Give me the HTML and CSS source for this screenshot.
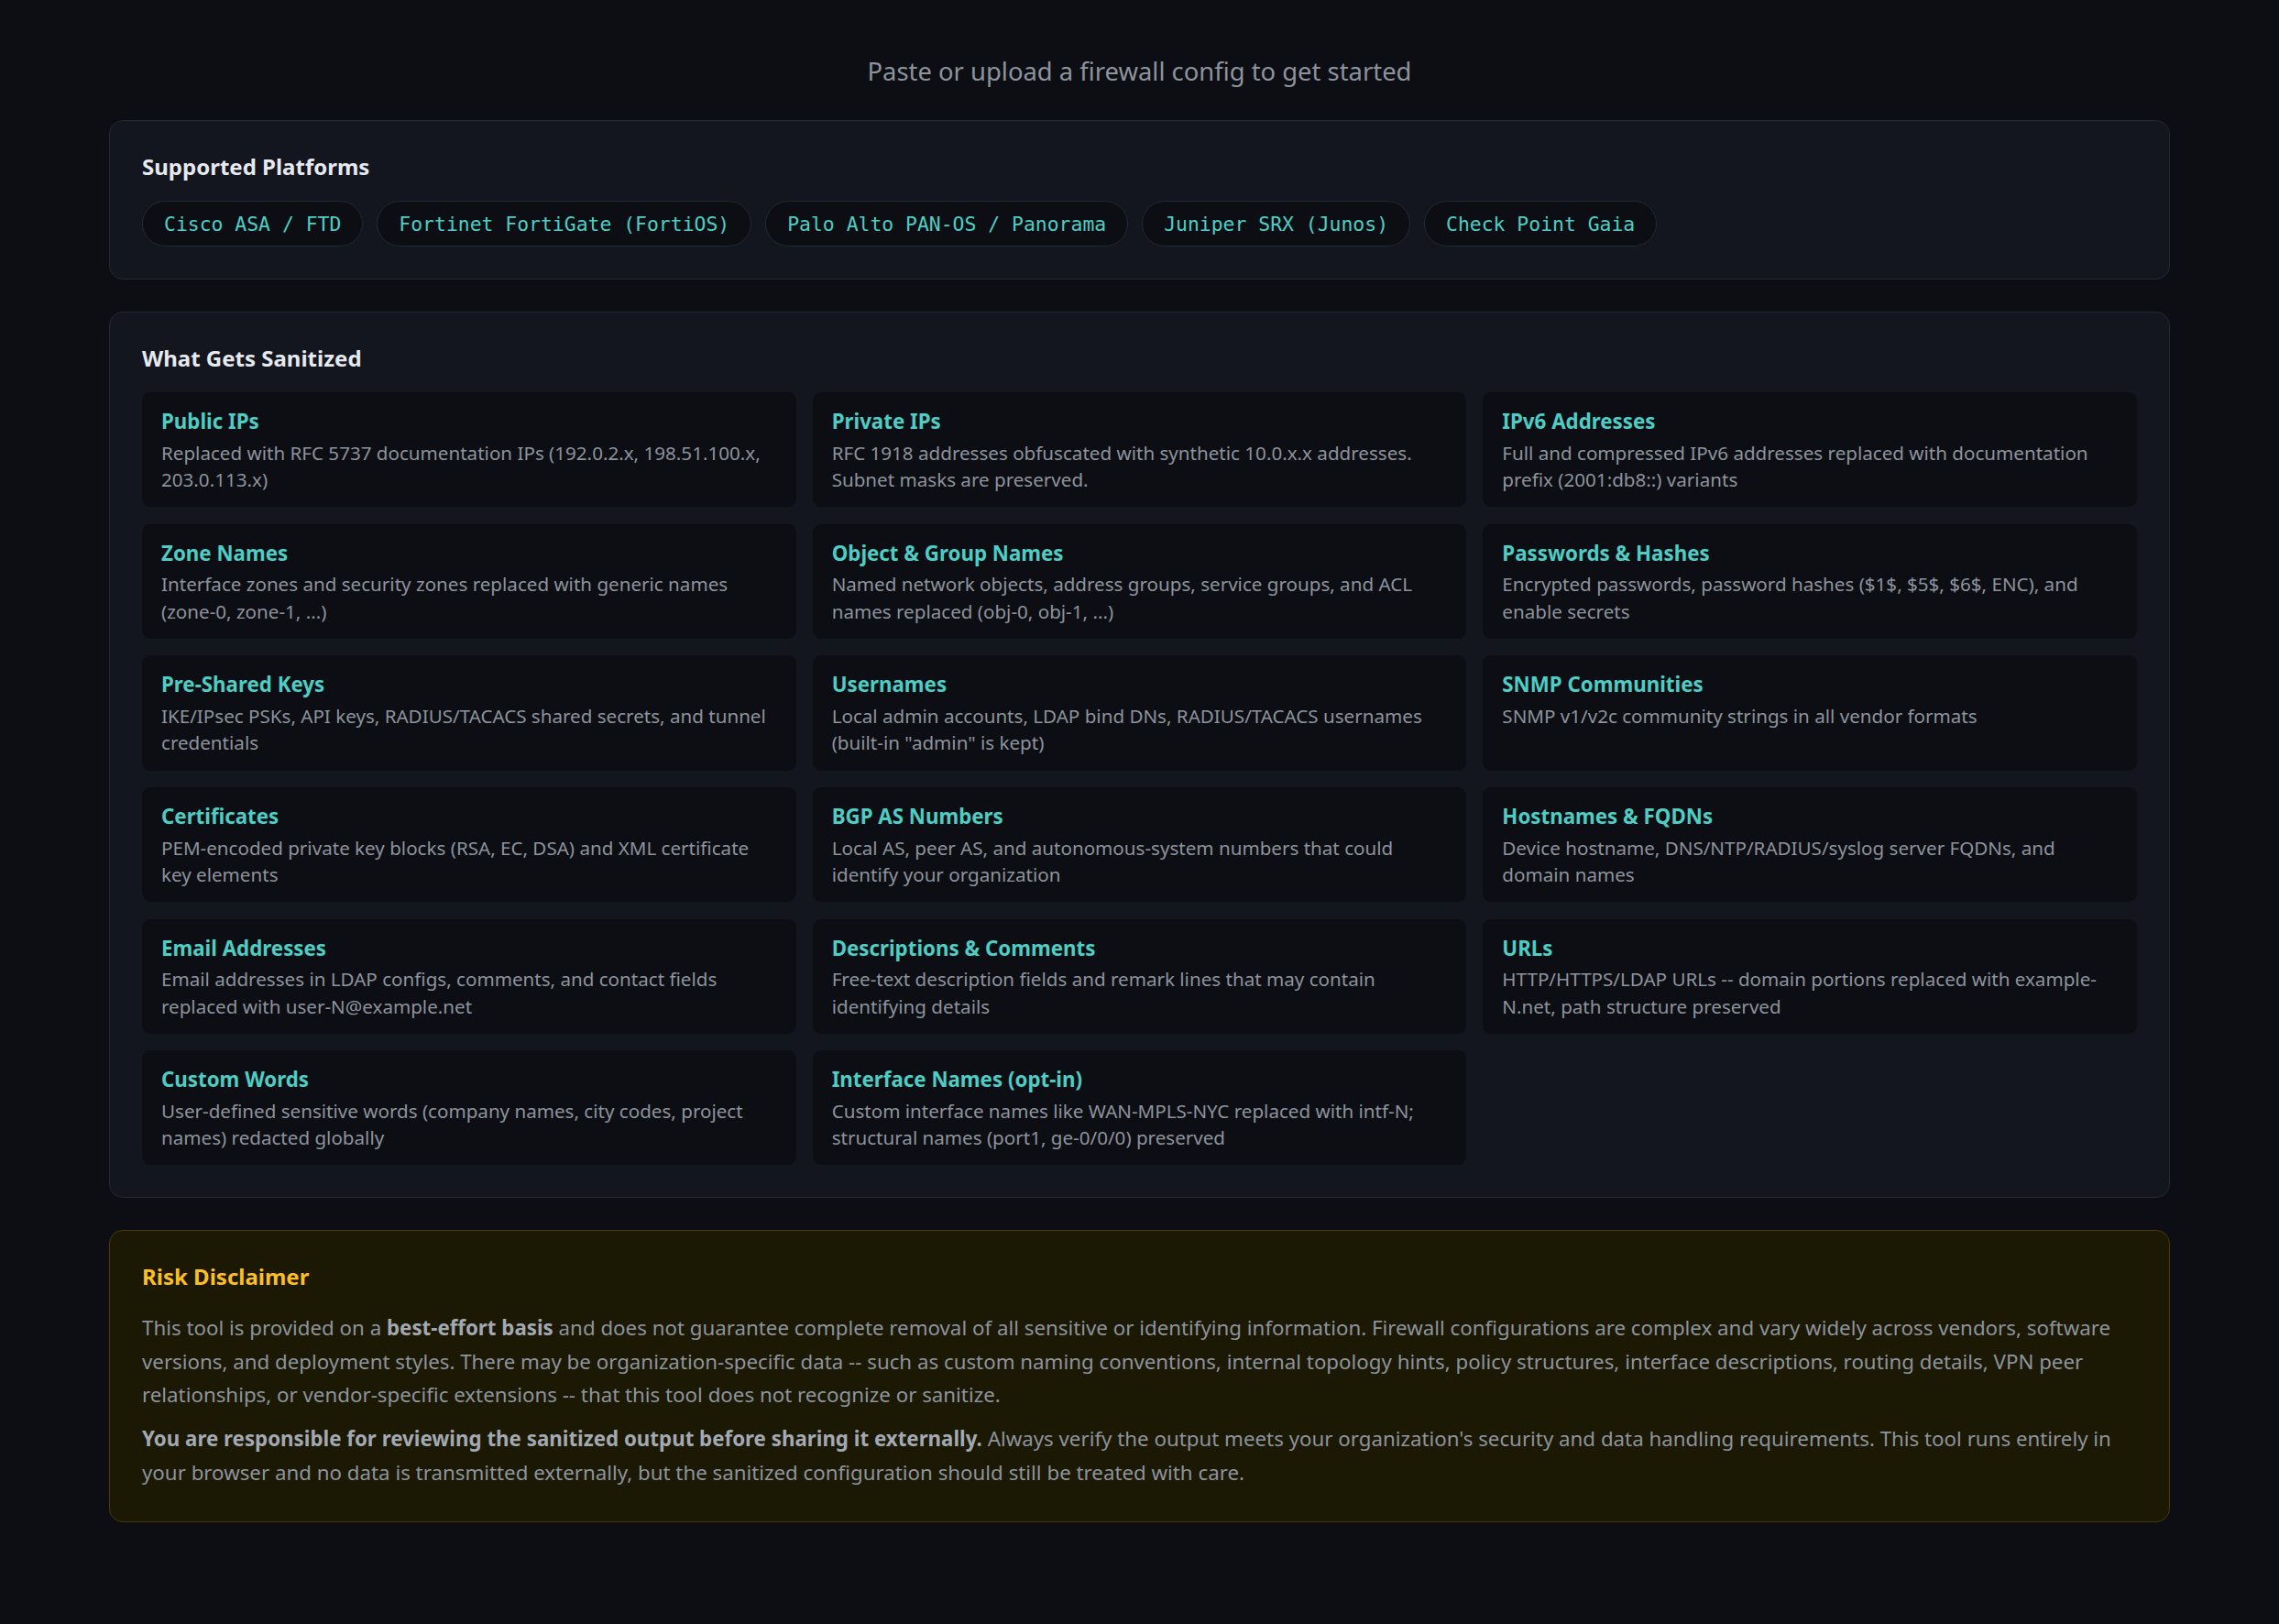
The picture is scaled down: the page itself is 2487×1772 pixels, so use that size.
FILE: index.html
```html
<!DOCTYPE html>
<html lang="en">
<head>
<meta charset="utf-8">
<title>Firewall Config Sanitizer</title>
<link rel="stylesheet" href="styles.css">
</head>
<body>
<main class="container">
  <p class="hint">Paste or upload a firewall config to get started</p>

  <section class="panel">
    <h2 class="panel-title">Supported Platforms</h2>
    <div class="chips">
      <span class="chip">Cisco ASA / FTD</span>
      <span class="chip">Fortinet FortiGate (FortiOS)</span>
      <span class="chip">Palo Alto PAN-OS / Panorama</span>
      <span class="chip">Juniper SRX (Junos)</span>
      <span class="chip">Check Point Gaia</span>
    </div>
  </section>

  <section class="panel">
    <h2 class="panel-title">What Gets Sanitized</h2>
    <div class="grid">
      <div class="card"><h3 class="card-title">Public IPs</h3><p class="card-desc">Replaced with RFC 5737 documentation IPs (192.0.2.x, 198.51.100.x, 203.0.113.x)</p></div>
      <div class="card"><h3 class="card-title">Private IPs</h3><p class="card-desc">RFC 1918 addresses obfuscated with synthetic 10.0.x.x addresses. Subnet masks are preserved.</p></div>
      <div class="card"><h3 class="card-title">IPv6 Addresses</h3><p class="card-desc">Full and compressed IPv6 addresses replaced with documentation prefix (2001:db8::) variants</p></div>
      <div class="card"><h3 class="card-title">Zone Names</h3><p class="card-desc">Interface zones and security zones replaced with generic names (zone-0, zone-1, ...)</p></div>
      <div class="card"><h3 class="card-title">Object &amp; Group Names</h3><p class="card-desc">Named network objects, address groups, service groups, and ACL names replaced (obj-0, obj-1, ...)</p></div>
      <div class="card"><h3 class="card-title">Passwords &amp; Hashes</h3><p class="card-desc">Encrypted passwords, password hashes ($1$, $5$, $6$, ENC), and enable secrets</p></div>
      <div class="card"><h3 class="card-title">Pre-Shared Keys</h3><p class="card-desc">IKE/IPsec PSKs, API keys, RADIUS/TACACS shared secrets, and tunnel credentials</p></div>
      <div class="card"><h3 class="card-title">Usernames</h3><p class="card-desc">Local admin accounts, LDAP bind DNs, RADIUS/TACACS usernames (built-in "admin" is kept)</p></div>
      <div class="card"><h3 class="card-title">SNMP Communities</h3><p class="card-desc">SNMP v1/v2c community strings in all vendor formats</p></div>
      <div class="card"><h3 class="card-title">Certificates</h3><p class="card-desc">PEM-encoded private key blocks (RSA, EC, DSA) and XML certificate key elements</p></div>
      <div class="card"><h3 class="card-title">BGP AS Numbers</h3><p class="card-desc">Local AS, peer AS, and autonomous-system numbers that could identify your organization</p></div>
      <div class="card"><h3 class="card-title">Hostnames &amp; FQDNs</h3><p class="card-desc">Device hostname, DNS/NTP/RADIUS/syslog server FQDNs, and domain names</p></div>
      <div class="card"><h3 class="card-title">Email Addresses</h3><p class="card-desc">Email addresses in LDAP configs, comments, and contact fields replaced with user-N@example.net</p></div>
      <div class="card"><h3 class="card-title">Descriptions &amp; Comments</h3><p class="card-desc">Free-text description fields and remark lines that may contain identifying details</p></div>
      <div class="card"><h3 class="card-title">URLs</h3><p class="card-desc">HTTP/HTTPS/LDAP URLs -- domain portions replaced with example-N.net, path structure preserved</p></div>
      <div class="card"><h3 class="card-title">Custom Words</h3><p class="card-desc">User-defined sensitive words (company names, city codes, project names) redacted globally</p></div>
      <div class="card"><h3 class="card-title">Interface Names (opt-in)</h3><p class="card-desc">Custom interface names like WAN-MPLS-NYC replaced with intf-N; structural names (port1, ge-0/0/0) preserved</p></div>
    </div>
  </section>

  <section class="panel disclaimer">
    <h2 class="panel-title warn">Risk Disclaimer</h2>
    <p class="disc-text">This tool is provided on a <strong>best-effort basis</strong> and does not guarantee complete removal of all sensitive or identifying information. Firewall configurations are complex and vary widely across vendors, software versions, and deployment styles. There may be organization-specific data -- such as custom naming conventions, internal topology hints, policy structures, interface descriptions, routing details, VPN peer relationships, or vendor-specific extensions -- that this tool does not recognize or sanitize.</p>
    <p class="disc-text"><strong>You are responsible for reviewing the sanitized output before sharing it externally.</strong> Always verify the output meets your organization's security and data handling requirements. This tool runs entirely in your browser and no data is transmitted externally, but the sanitized configuration should still be treated with care.</p>
  </section>
</main>
</body>
</html>
```

FILE: styles.css
```css
* { box-sizing: border-box; }

html, body {
  margin: 0;
  padding: 0;
  background: #0c0e13;
}

body {
  font-family: "Noto Sans", "DejaVu Sans", sans-serif;
  color: #8d939d;
  line-height: 1.5;
  min-height: 1772px;
}

.container {
  max-width: 2249px;
  margin: 0 auto;
  padding: 57px 0 60px;
}

.hint {
  margin: 0 0 33px;
  text-align: center;
  font-size: 27.4px;
  line-height: 41px;
  color: #8d939d;
}

.panel {
  background: #13161f;
  border: 1px solid #242936;
  border-radius: 15px;
  padding: 35px;
  margin-bottom: 35px;
}

.panel-title {
  margin: 0 0 22px;
  font-size: 24px;
  line-height: 30px;
  font-weight: 700;
  color: #e6e9ee;
}

.chips {
  display: flex;
  flex-wrap: wrap;
  gap: 15px;
}

.chip {
  font-family: "DejaVu Sans Mono", monospace;
  font-size: 21.42px;
  line-height: 30px;
  padding: 10px 23px 8px;
  border: 1px solid #242936;
  border-radius: 999px;
  background: #0c0e13;
  color: #4ecdc4;
}

.grid {
  display: grid;
  grid-template-columns: repeat(3, 1fr);
  gap: 18.4px 18px;
  margin-top: 1px;
}

.card {
  background: #0c0e13;
  border-radius: 9px;
  padding: 15px 21px;
}

.card-title {
  margin: 0 0 3px;
  font-size: 22.3px;
  line-height: 33.75px;
  font-weight: 700;
  color: #4ecdc4;
}

.card-desc {
  margin: 0;
  font-size: 20.6px;
  line-height: 29.25px;
  color: #8d939d;
}

.disclaimer {
  background: #1b1804;
  border-color: #4a3a0a;
}

.warn {
  color: #fbbf24;
  margin-bottom: 23px;
}

.disc-text {
  margin: 0 0 12px;
  font-size: 22.3px;
  line-height: 36.3px;
  color: #8d939d;
}

.disc-text:last-child { margin-bottom: 0; }

.disc-text strong {
  color: #a3a9b3;
  font-weight: 700;
}
```
